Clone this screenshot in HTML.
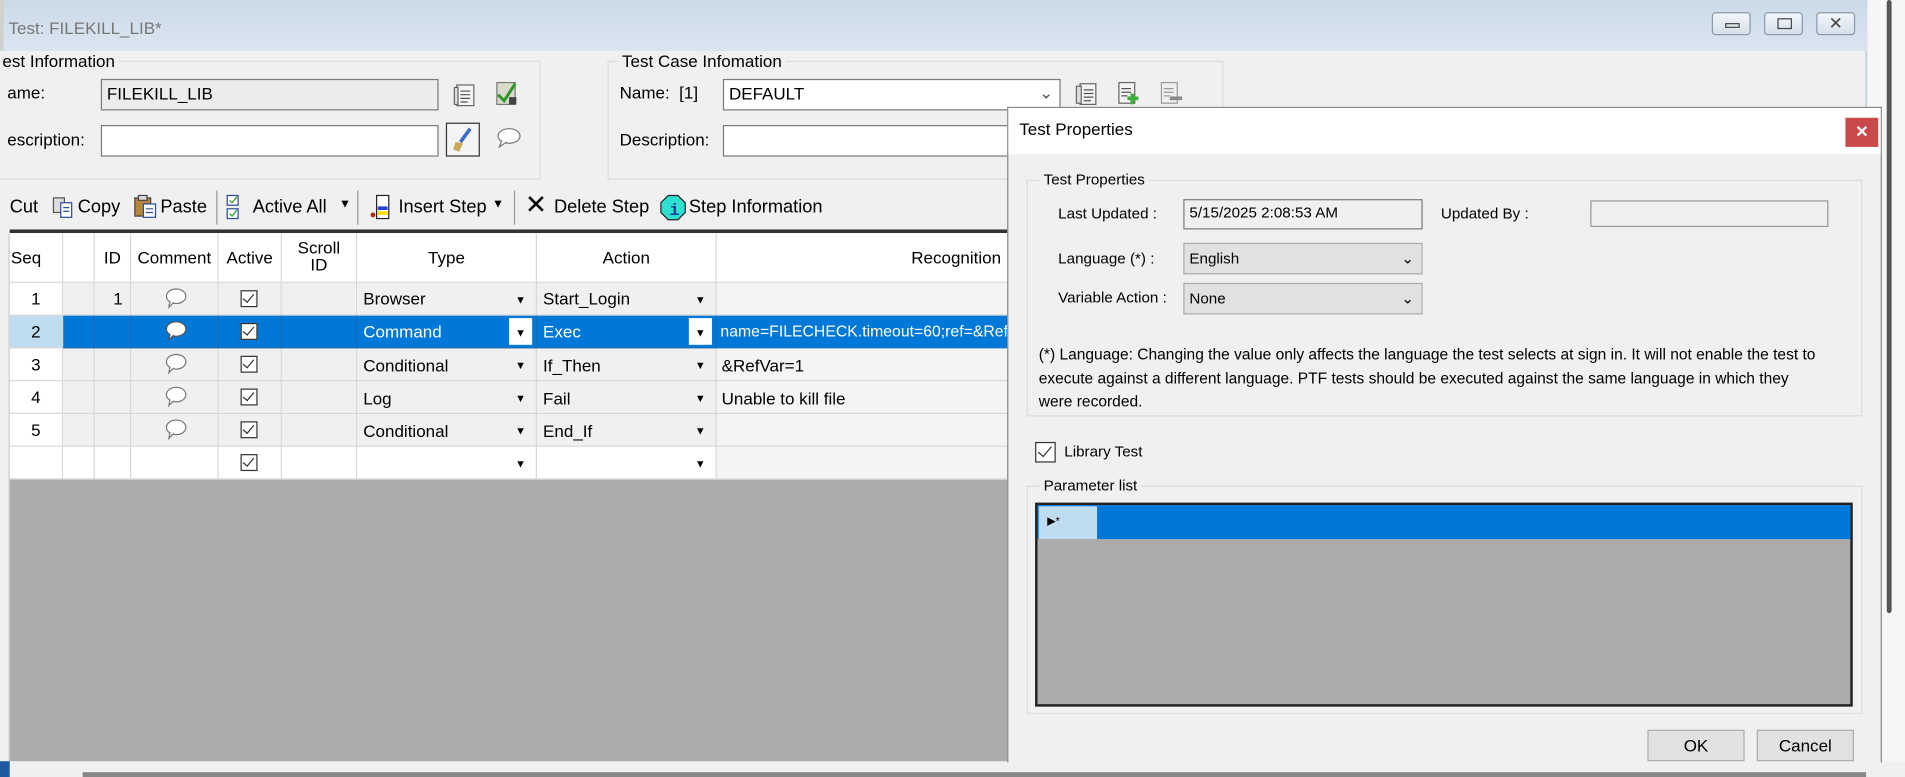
<!DOCTYPE html>
<html><head><meta charset="utf-8"><style>
*{box-sizing:border-box;margin:0;padding:0}
html,body{width:1905px;height:777px;overflow:hidden;background:#f0f0f0}
#w{position:absolute;left:0;top:0;width:1568px;height:640px;transform:scale(1.2149,1.2141);transform-origin:0 0;font-family:"Liberation Sans Narrow","Liberation Sans",sans-serif;font-size:14px;color:#000}
.a{position:absolute}
.s{font-family:"Liberation Sans",sans-serif;font-size:12.5px}
.grp{position:absolute;border:1px solid #dcdcdc}
.lg{position:absolute;background:#f0f0f0;padding:0 3px;top:-9px}
.inp{position:absolute;border:1px solid #7a7a7a;background:#fff;height:26px;padding:3px 4px}
.cell{position:absolute;border-right:1px solid #d8d8d8;border-bottom:1px solid #d8d8d8;height:27px;line-height:26px;overflow:hidden;white-space:nowrap}
.cb{position:absolute;width:14px;height:14px;border:1px solid #333;background:#fff}
.cb:after{content:"";position:absolute;left:3px;top:0px;width:4px;height:8px;border:solid #333;border-width:0 1.5px 1.5px 0;transform:rotate(40deg)}
.dd{position:absolute;font-size:9px}
.wb{position:absolute;top:10px;width:32px;height:19px;border:1px solid #8a9aab;border-radius:3px;background:linear-gradient(#f2f6fa,#d6e0ea)}
.btn{position:absolute;background:#e1e1e1;border:1px solid #adadad;height:26px;line-height:24px;text-align:center;font-family:"Liberation Sans",sans-serif;font-size:14px}
</style></head><body><div id="w">
<div class="a" style="left:1535px;top:0;width:33px;height:640px;background:#f6f6f6"></div>
<div class="a" style="left:1553px;top:0;width:4px;height:505px;background:#555;border-radius:2px"></div>
<div class="a" style="left:0;top:0;width:1537px;height:628px;background:#f0f0f0;border-right:2px solid #c9d6e3"></div>
<div class="a" style="left:0;top:0;width:1537px;height:42px;background:linear-gradient(#cbd9e8,#dbe5f0)"></div>
<div class="a" style="left:0;top:0;width:3px;height:628px;background:#d0d0d0"></div>
<div class="a" style="left:7px;top:15px;color:#777;font-size:14px">Test: FILEKILL_LIB*</div>
<div class="wb" style="left:1409px"><div class="a" style="left:10px;top:8px;width:12px;height:4px;border:1px solid #444"></div></div>
<div class="wb" style="left:1452px"><div class="a" style="left:10px;top:4px;width:12px;height:9px;border:1px solid #444"></div></div>
<div class="wb" style="left:1495px;text-align:center;line-height:16px;font-size:14px;color:#444">✕</div>
<div class="a" style="left:0;top:42px;width:1535px;height:586px;background:#f0f0f0"></div>

<div class="grp" style="left:-2px;top:50px;width:447px;height:98px"><div class="lg" style="left:0">est Information</div></div>
<div class="a" style="left:6px;top:68px">ame:</div>
<div class="a" style="left:6px;top:107px">escription:</div>
<div class="inp" style="left:83px;top:65px;width:278px;background:#ececec">FILEKILL_LIB</div>
<div class="inp" style="left:83px;top:103px;width:278px"></div>
<svg class="a" style="left:372px;top:67px" width="22" height="22"><rect x="4" y="3" width="14" height="17" fill="#f4f4f4" stroke="#666"/><rect x="2" y="5" width="3" height="14" fill="#ddd" stroke="#666"/><path d="M7 8h8M7 11h8M7 14h8M7 17h6" stroke="#555"/></svg>
<svg class="a" style="left:406px;top:66px" width="22" height="22"><rect x="3" y="2" width="15" height="18" fill="#dcdccc" stroke="#777"/><path d="M4 12l5 5 9-14" stroke="#2a9a2a" stroke-width="2.5" fill="none"/><rect x="13" y="14" width="6" height="6" fill="#444"/></svg>
<div class="a" style="left:367px;top:101px;width:28px;height:28px;border:1px solid #333;background:#f4f4f4"></div>
<svg class="a" style="left:370px;top:104px" width="22" height="22"><path d="M17 2L9 13" stroke="#3a6cc8" stroke-width="3"/><path d="M5 13l6 1-3 7-5-2z" fill="#c9a95a"/></svg>
<svg class="a" style="left:408px;top:104px" width="22" height="18"><ellipse cx="11" cy="8" rx="9" ry="6" fill="#fff" stroke="#777"/><path d="M5 12l-2 5 6-4" fill="#fff" stroke="#777"/></svg>

<div class="grp" style="left:500px;top:50px;width:507px;height:98px"><div class="lg" style="left:8px">Test Case Infomation</div></div>
<div class="a" style="left:510px;top:68px">Name:&nbsp; [1]</div>
<div class="a" style="left:510px;top:107px">Description:</div>
<div class="inp" style="left:595px;top:65px;width:278px">DEFAULT<span class="a" style="right:5px;top:2px;color:#555">&#8964;</span></div>
<div class="inp" style="left:595px;top:103px;width:240px"></div>
<svg class="a" style="left:884px;top:66px" width="22" height="22"><rect x="5" y="3" width="13" height="17" fill="#f4f4f4" stroke="#666"/><rect x="2" y="5" width="4" height="14" fill="#ddd" stroke="#666"/><path d="M8 8h8M8 11h8M8 14h8M8 17h6" stroke="#555"/></svg>
<svg class="a" style="left:918px;top:66px" width="22" height="22"><rect x="3" y="2" width="13" height="17" fill="#f4f4f4" stroke="#666"/><path d="M5 7h8M5 10h8M5 13h5" stroke="#555"/><path d="M14 11v9M10 15h9" stroke="#3cb03c" stroke-width="3"/></svg>
<svg class="a" style="left:953px;top:66px" width="22" height="22"><rect x="3" y="2" width="13" height="17" fill="#eee" stroke="#999"/><path d="M5 7h8M5 10h8M5 13h5" stroke="#999"/><path d="M10 15h10" stroke="#888" stroke-width="3"/></svg>

<div class="a" style="left:8px;top:162px;font-size:15px">Cut</div>
<svg class="a" style="left:42px;top:161px" width="20" height="20"><rect x="2" y="2" width="9" height="12" fill="#ddd" stroke="#555"/><rect x="8" y="6" width="9" height="12" fill="#fff" stroke="#2a4a9a"/><path d="M10 10h5M10 13h5" stroke="#2a4a9a"/></svg>
<div class="a" style="left:64px;top:162px;font-size:15px">Copy</div>
<svg class="a" style="left:110px;top:160px" width="20" height="20"><rect x="1" y="3" width="13" height="15" fill="#b8833a" stroke="#444"/><rect x="4" y="1" width="7" height="4" fill="#ddd" stroke="#444"/><rect x="8" y="8" width="10" height="11" fill="#fff" stroke="#2a4a9a"/><path d="M10 12h6M10 15h6" stroke="#2a4a9a"/></svg>
<div class="a" style="left:132px;top:162px;font-size:15px">Paste</div>
<div class="a" style="left:178px;top:157px;width:1px;height:28px;background:#999"></div>
<svg class="a" style="left:186px;top:160px" width="12" height="22"><rect x="1" y="1" width="9" height="8" fill="#fff" stroke="#2a4a9a"/><rect x="1" y="12" width="9" height="8" fill="#fff" stroke="#2a4a9a"/><path d="M3 5l2 2 4-5M3 16l2 2 4-5" stroke="#2a9a2a" fill="none"/></svg>
<div class="a" style="left:208px;top:162px;font-size:15px">Active All</div>
<div class="a" style="left:279px;top:163px;font-size:10px">▼</div>
<div class="a" style="left:294px;top:157px;width:1px;height:28px;background:#999"></div>
<svg class="a" style="left:303px;top:160px" width="20" height="22"><rect x="7" y="1" width="10" height="19" fill="#fff" stroke="#222"/><rect x="8" y="10" width="8" height="3" fill="#2244cc"/><rect x="8" y="14" width="8" height="3" fill="#ffdd00"/><circle cx="4" cy="17" r="2" fill="#b03010"/></svg>
<div class="a" style="left:328px;top:162px;font-size:15px">Insert Step</div>
<div class="a" style="left:405px;top:163px;font-size:10px">▼</div>
<div class="a" style="left:423px;top:157px;width:1px;height:28px;background:#999"></div>
<div class="a" style="left:432px;top:157px;font-size:22px;font-family:'Liberation Sans',sans-serif;line-height:24px">✕</div>
<div class="a" style="left:456px;top:162px;font-size:15px">Delete Step</div>
<svg class="a" style="left:543px;top:160px" width="22" height="22"><polygon points="7,1 15,1 21,7 21,15 15,21 7,21 1,15 1,7" fill="#2de0d0" stroke="#222"/><text x="8" y="17" font-size="14" font-family="Liberation Mono" fill="#1a3a9a" font-weight="bold">i</text></svg>
<div class="a" style="left:567px;top:162px;font-size:15px">Step Information</div>

<div class="a" style="left:8px;top:189px;width:822px;height:3px;background:#333"></div>
<div class="a" style="left:8px;top:192px;width:822px;height:203px;background:#fff"></div>
<div class="a" style="left:0px;top:395px;width:830px;height:233px;background:#ababab"></div>
<div class="a" style="left:0;top:192px;width:8px;height:436px;background:#f0f0f0;border-right:1px solid #ccc"></div>
<div class="cell" style="left:8px;top:192px;width:44px;height:41px;line-height:40px;padding-left:1px">Seq</div>
<div class="cell" style="left:52px;top:192px;width:26px;height:41px"></div>
<div class="cell" style="left:78px;top:192px;width:30px;height:41px;line-height:40px;text-align:center">ID</div>
<div class="cell" style="left:108px;top:192px;width:72px;height:41px;line-height:40px;text-align:center">Comment</div>
<div class="cell" style="left:180px;top:192px;width:52px;height:41px;line-height:40px;text-align:center">Active</div>
<div class="cell" style="left:232px;top:192px;width:62px;height:41px;line-height:14px;text-align:center;padding-top:5px">Scroll<br>ID</div>
<div class="cell" style="left:294px;top:192px;width:148px;height:41px;line-height:40px;text-align:center">Type</div>
<div class="cell" style="left:442px;top:192px;width:148px;height:41px;line-height:40px;text-align:center">Action</div>
<div class="cell" style="left:590px;top:192px;width:240px;height:41px;line-height:40px;text-align:right;padding-right:6px;border-right:0">Recognition</div>

<div class="cell" style="left:8px;top:233px;width:44px;text-align:center">1</div>
<div class="cell" style="left:52px;top:233px;width:26px;background:#f0f0f0"></div>
<div class="cell" style="left:78px;top:233px;width:30px;text-align:right;padding-right:6px;background:#f0f0f0">1</div>
<div class="cell" style="left:108px;top:233px;width:72px;background:#f0f0f0"></div>
<div class="cell" style="left:180px;top:233px;width:52px;background:#f0f0f0"></div>
<div class="cell" style="left:232px;top:233px;width:62px;background:#f0f0f0"></div>
<div class="cell" style="left:294px;top:233px;width:148px;padding-left:5px;background:#f0f0f0">Browser</div>
<div class="cell" style="left:442px;top:233px;width:148px;padding-left:5px;background:#f0f0f0">Start_Login</div>
<div class="cell" style="left:590px;top:233px;width:240px;background:#f4f4f4;border-right:0"></div>
<div class="cell" style="left:8px;top:260px;width:44px;text-align:center;background:#c0dcf0">2</div>
<div class="a" style="left:52px;top:260px;width:778px;height:27px;background:#0078d7"></div>
<div class="cell" style="left:52px;top:260px;width:26px;border-color:#1a6bb0;background:transparent"></div>
<div class="cell" style="left:78px;top:260px;width:30px;border-color:#1a6bb0;background:transparent"></div>
<div class="cell" style="left:108px;top:260px;width:72px;border-color:#1a6bb0;background:transparent"></div>
<div class="cell" style="left:180px;top:260px;width:52px;border-color:#1a6bb0;background:transparent"></div>
<div class="cell" style="left:232px;top:260px;width:62px;border-color:#1a6bb0;background:transparent"></div>
<div class="cell" style="left:294px;top:260px;width:148px;padding-left:5px;color:#fff;border-color:#1a6bb0;background:transparent">Command</div>
<div class="cell" style="left:442px;top:260px;width:148px;padding-left:5px;color:#fff;border-color:#1a6bb0;background:transparent">Exec</div>
<div class="a" style="left:419px;top:262px;width:19px;height:22px;background:#fff"></div>
<div class="a" style="left:567px;top:262px;width:19px;height:22px;background:#fff"></div>
<div class="cell" style="left:590px;top:260px;width:240px;padding-left:3px;color:#fff;border:0;font-size:13px">name=FILECHECK.timeout=60;ref=&amp;Ref</div>
<div class="cell" style="left:8px;top:287px;width:44px;text-align:center">3</div>
<div class="cell" style="left:8px;top:314px;width:44px;text-align:center">4</div>
<div class="cell" style="left:8px;top:341px;width:44px;text-align:center">5</div>
<div class="cell" style="left:8px;top:368px;width:44px"></div>
<div class="a" style="left:52px;top:287px;width:778px;height:81px;background:#f0f0f0"></div>
<div class="a" style="left:52px;top:368px;width:778px;height:27px;background:#fff"></div>
<div class="a" style="left:590px;top:287px;width:240px;height:108px;background:#f4f4f4"></div>
<div class="cell" style="left:52px;top:287px;width:26px;height:108px;background:transparent;border-bottom:0"></div>
<div class="cell" style="left:78px;top:287px;width:30px;height:108px;background:transparent;border-bottom:0"></div>
<div class="cell" style="left:108px;top:287px;width:72px;height:108px;background:transparent;border-bottom:0"></div>
<div class="cell" style="left:180px;top:287px;width:52px;height:108px;background:transparent;border-bottom:0"></div>
<div class="cell" style="left:232px;top:287px;width:62px;height:108px;background:transparent;border-bottom:0"></div>
<div class="cell" style="left:294px;top:287px;width:148px;height:108px;background:transparent;border-bottom:0"></div>
<div class="cell" style="left:442px;top:287px;width:148px;height:108px;background:transparent;border-bottom:0"></div>
<div class="a" style="left:52px;top:313px;width:778px;height:1px;background:#d8d8d8"></div>
<div class="a" style="left:52px;top:340px;width:778px;height:1px;background:#d8d8d8"></div>
<div class="a" style="left:52px;top:367px;width:778px;height:1px;background:#d8d8d8"></div>
<div class="a" style="left:52px;top:394px;width:778px;height:1px;background:#d8d8d8"></div>
<div class="a" style="left:299px;top:293px">Conditional</div><div class="a" style="left:447px;top:293px">If_Then</div><div class="a" style="left:594px;top:293px">&amp;RefVar=1</div>
<div class="a" style="left:299px;top:320px">Log</div><div class="a" style="left:447px;top:320px">Fail</div><div class="a" style="left:594px;top:320px">Unable to kill file</div>
<div class="a" style="left:299px;top:347px">Conditional</div><div class="a" style="left:447px;top:347px">End_If</div>
<div class="dd" style="left:424px;top:242px">▼</div><div class="dd" style="left:572px;top:242px">▼</div>
<div class="dd" style="left:424px;top:269px">▼</div><div class="dd" style="left:572px;top:269px">▼</div>
<div class="dd" style="left:424px;top:296px">▼</div><div class="dd" style="left:572px;top:296px">▼</div>
<div class="dd" style="left:424px;top:323px">▼</div><div class="dd" style="left:572px;top:323px">▼</div>
<div class="dd" style="left:424px;top:350px">▼</div><div class="dd" style="left:572px;top:350px">▼</div>
<div class="dd" style="left:424px;top:377px">▼</div><div class="dd" style="left:572px;top:377px">▼</div>
<div class="cb" style="left:198px;top:239px"></div><div class="cb" style="left:198px;top:266px"></div><div class="cb" style="left:198px;top:293px"></div>
<div class="cb" style="left:198px;top:320px"></div><div class="cb" style="left:198px;top:347px"></div><div class="cb" style="left:198px;top:374px"></div>
<svg class="a" style="left:135px;top:237px" width="20" height="18"><ellipse cx="10" cy="7" rx="8" ry="6" fill="#fff" stroke="#777"/><path d="M5 11l-1 5 4-4" fill="#fff" stroke="#777"/></svg>
<svg class="a" style="left:135px;top:264px" width="20" height="18"><ellipse cx="10" cy="7" rx="8" ry="6" fill="#fff" stroke="#555"/><path d="M5 11l-1 5 4-4" fill="#fff" stroke="#555"/></svg>
<svg class="a" style="left:135px;top:291px" width="20" height="18"><ellipse cx="10" cy="7" rx="8" ry="6" fill="#fff" stroke="#777"/><path d="M5 11l-1 5 4-4" fill="#fff" stroke="#777"/></svg>
<svg class="a" style="left:135px;top:318px" width="20" height="18"><ellipse cx="10" cy="7" rx="8" ry="6" fill="#fff" stroke="#777"/><path d="M5 11l-1 5 4-4" fill="#fff" stroke="#777"/></svg>
<svg class="a" style="left:135px;top:345px" width="20" height="18"><ellipse cx="10" cy="7" rx="8" ry="6" fill="#fff" stroke="#777"/><path d="M5 11l-1 5 4-4" fill="#fff" stroke="#777"/></svg>

<div class="a" style="left:0;top:627px;width:1568px;height:13px;background:#f0f0f0"></div>
<div class="a" style="left:0;top:627px;width:8px;height:13px;background:#1e5aa0"></div>
<div class="a" style="left:68px;top:636px;width:1468px;height:4px;background:#888"></div>

<div class="a" style="left:829px;top:88px;width:720px;height:540px;background:#f0f0f0;border:1px solid #888;border-bottom:0"></div>
<div class="a" style="left:830px;top:89px;width:718px;height:38px;background:#fff"></div>
<div class="a s" style="left:839px;top:98px;font-size:14px">Test Properties</div>
<div class="a" style="left:1519px;top:97px;width:27px;height:24px;background:#c94a4a;color:#fff;text-align:center;line-height:24px;font-size:13px;font-weight:bold;font-family:'Liberation Sans',sans-serif">✕</div>
<div class="grp s" style="left:845px;top:148px;width:688px;height:195px"><div class="lg" style="left:10px;top:-8px">Test Properties</div></div>
<div class="a s" style="left:871px;top:169px">Last Updated :</div>
<div class="a s" style="left:871px;top:206px">Language (*) :</div>
<div class="a s" style="left:871px;top:238px">Variable Action :</div>
<div class="a s" style="left:1186px;top:169px">Updated By :</div>
<div class="inp s" style="left:974px;top:164px;width:197px;height:25px;background:#f0f0f0">5/15/2025 2:08:53 AM</div>
<div class="inp s" style="left:1309px;top:165px;width:196px;height:22px;background:#f0f0f0;border-color:#999"></div>
<div class="inp s" style="left:974px;top:200px;width:197px;height:26px;background:#e1e1e1;border-color:#adadad;padding-top:5px">English<span class="a" style="right:6px;top:4px">&#8964;</span></div>
<div class="inp s" style="left:974px;top:233px;width:197px;height:26px;background:#e1e1e1;border-color:#adadad;padding-top:5px">None<span class="a" style="right:6px;top:4px">&#8964;</span></div>
<div class="a s" style="left:855px;top:282px;white-space:nowrap;line-height:19.5px;font-size:12.8px">(*) Language: Changing the value only affects the language the test selects at sign in. It will not enable the test to<br>execute against a different language. PTF tests should be executed against the same language in which they<br>were recorded.</div>
<div class="a" style="left:852px;top:364px;width:17px;height:17px;border:1px solid #333;background:#fff"></div>
<div class="a" style="left:857px;top:365px;width:6px;height:11px;border:solid #333;border-width:0 1.5px 1.5px 0;transform:rotate(40deg)"></div>
<div class="a s" style="left:876px;top:365px">Library Test</div>
<div class="grp s" style="left:845px;top:400px;width:688px;height:188px"><div class="lg" style="left:10px;top:-8px">Parameter list</div></div>
<div class="a" style="left:852px;top:414px;width:673px;height:168px;background:#ababab;border:2px solid #222"></div>
<div class="a" style="left:854px;top:416px;width:669px;height:28px;background:#0078d7"></div>
<div class="a" style="left:855px;top:417px;width:48px;height:27px;background:#c0dcf0;font-size:9px;padding:7px 0 0 7px">▶*</div>
<div class="btn" style="left:1356px;top:601px;width:80px">OK</div>
<div class="btn" style="left:1446px;top:601px;width:80px">Cancel</div>
</div></body></html>
